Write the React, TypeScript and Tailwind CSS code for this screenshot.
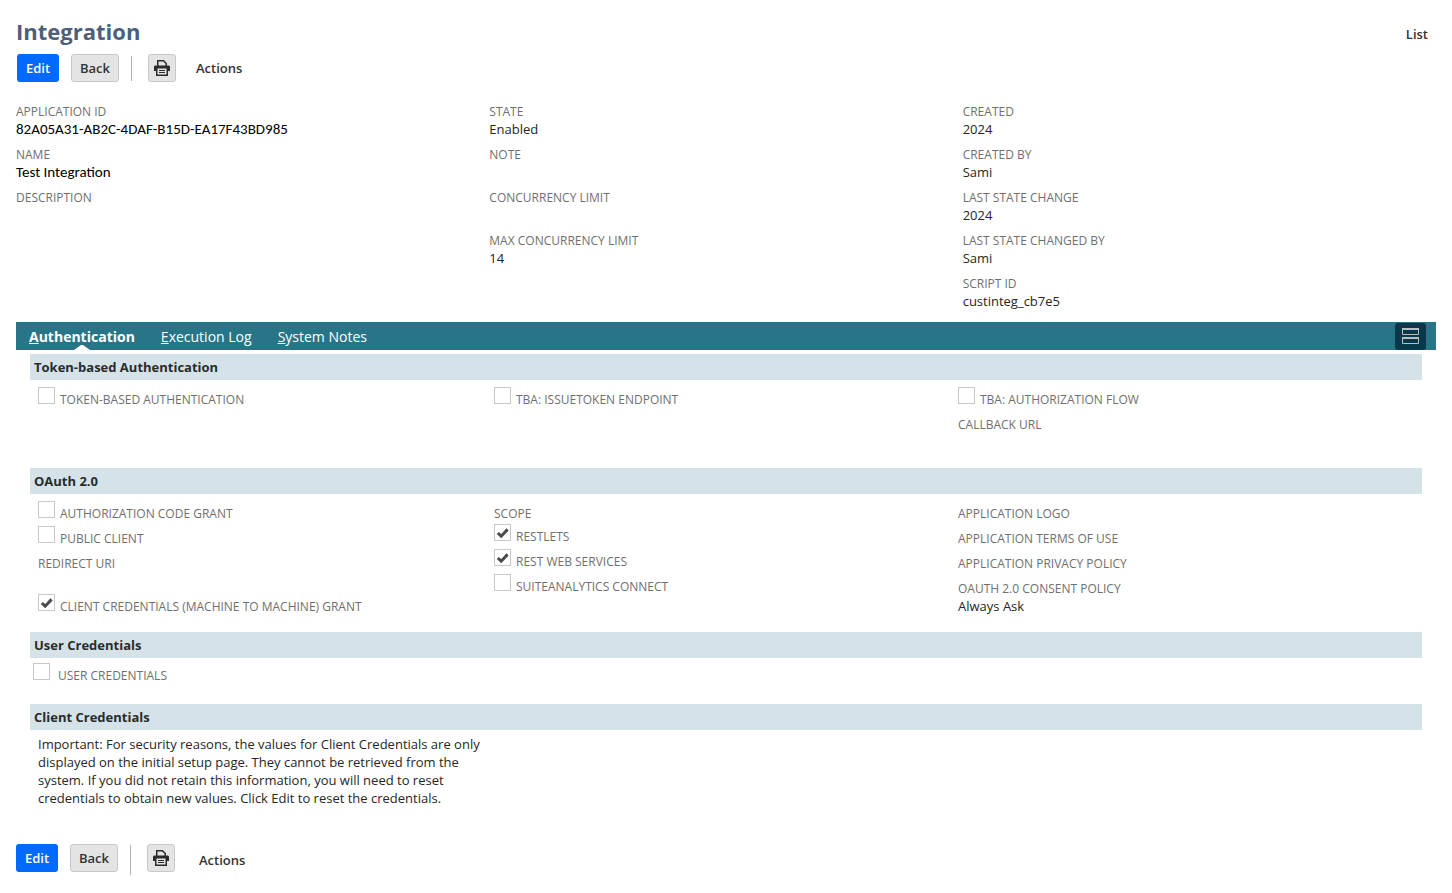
import type { ReactNode } from "react";

function Checkmark() {
  return (
    <svg className="pointer-events-none absolute left-[2px] top-[3px]" width="13" height="12" viewBox="0 0 13 12" fill="none" aria-hidden="true">
      <path d="M1.8 6 L5.2 9.2 L11.6 2.4" stroke="#4a4a4a" strokeWidth="3" />
    </svg>
  );
}

type CheckProps = { id: string; label: string; checked?: boolean; gap?: "normal" | "wide" };

function CheckRow({ id, label, checked = false, gap = "normal" }: CheckProps) {
  return (
    <div className={`flex h-[25px] items-start ${gap === "wide" ? "gap-2" : "gap-[5px]"}`}>
      <span className="relative block size-[17px]">
        <input
          id={id}
          type="checkbox"
          defaultChecked={checked}
          className="block size-[17px] appearance-none border border-[#c8c8c8] bg-white"
        />
        {checked && <Checkmark />}
      </span>
      <label htmlFor={id} className="pt-[3px] text-xs leading-5 text-[#6f6f6f]">
        {label}
      </label>
    </div>
  );
}

function TextRow({ label, value, tall = false }: { label: string; value?: string; tall?: boolean }) {
  return (
    <div className={tall ? "h-[43px] pt-[3px]" : "h-[25px] pt-[3px]"}>
      <div className="h-[18px] text-xs leading-5 text-[#6f6f6f]">{label}</div>
      {value && <div className="text-[13px] leading-[18px] text-[#262626]">{value}</div>}
    </div>
  );
}

function Field({ label, value, alt = false }: { label: string; value?: string; alt?: boolean }) {
  return (
    <div>
      <dt className="h-[18px] text-xs leading-5 text-[#6f6f6f]">{label}</dt>
      <dd
        className={
          alt
            ? "h-[18px] font-['Carlito','Lato',sans-serif] text-[15px] leading-[18px] text-black"
            : "h-[18px] text-[13px] leading-[18px] text-[#262626]"
        }
      >
        {value}
      </dd>
    </div>
  );
}

function Section({ title, children }: { title: string; children: ReactNode }) {
  return (
    <section>
      <h2 className="bg-[#d5e3e8] px-1 text-[13px] font-bold leading-[26px] text-[#2b2b2b]">{title}</h2>
      {children}
    </section>
  );
}

function PrintIcon() {
  return (
    <svg width="16" height="16" viewBox="0 0 16 16" fill="none" aria-hidden="true">
      <path d="M3.75 6V0.75H9.5L12.25 3.5V6" stroke="#2b2b2b" strokeWidth="1.5" />
      <path d="M1 5.5H15L16 6.5V11H13.5V8.5H2.5V11H0V6.5Z" fill="#2b2b2b" />
      <path d="M2.75 8V15.25H13.25V8" stroke="#2b2b2b" strokeWidth="1.5" />
      <path d="M5 10.5H11M5 12.5H11" stroke="#2b2b2b" />
    </svg>
  );
}

function Toolbar({ footer = false }: { footer?: boolean }) {
  return (
    <div className={footer ? "flex items-start" : "flex items-start pl-px"}>
      <button type="button" className="h-7 w-[42px] rounded-[3px] bg-[#006aff] pt-px text-[13px] font-semibold text-white">
        Edit
      </button>
      <button
        type="button"
        className="ml-3 h-7 w-12 rounded-[3px] border border-[#c8c8c8] bg-[#e4e4e4] pt-px text-[13px] font-semibold text-[#333333]"
      >
        Back
      </button>
      <span className={footer ? "ml-3 mt-px h-[30px] w-px bg-[#b3b3b3]" : "ml-3 mt-[2px] h-[25px] w-px bg-[#b3b3b3]"} />
      <button
        type="button"
        aria-label="Print"
        className="ml-4 flex size-7 items-center justify-center rounded-[3px] border border-[#c8c8c8] bg-[#e4e4e4]"
      >
        <PrintIcon />
      </button>
      <button
        type="button"
        className={
          footer
            ? "ml-6 h-8 pt-px text-[13px] font-semibold text-[#333333]"
            : "ml-5 h-7 pt-px text-[13px] font-semibold text-[#333333]"
        }
      >
        Actions
      </button>
    </div>
  );
}

export default function App() {
  return (
    <main className="bg-white px-4 pb-5 font-['Open_Sans',sans-serif]">
      <header className="flex items-start justify-between pt-4">
        <h1 className="text-[22px] font-bold leading-[30px] text-[#4d5f79]">Integration</h1>
        <a href="#list" className="pr-2 pt-[9px] text-[13px] font-semibold leading-[18px] text-[#333333]">
          List
        </a>
      </header>

      <div className="pt-2">
        <Toolbar />
      </div>

      <div className="grid grid-cols-3 pb-3 pt-5">
        <dl className="flex flex-col gap-[7px]">
          <Field label="APPLICATION ID" value="82A05A31-AB2C-4DAF-B15D-EA17F43BD985" alt />
          <Field label="NAME" value="Test Integration" alt />
          <Field label="DESCRIPTION" />
        </dl>
        <dl className="flex flex-col gap-[7px]">
          <Field label="STATE" value="Enabled" />
          <Field label="NOTE" />
          <Field label="CONCURRENCY LIMIT" />
          <Field label="MAX CONCURRENCY LIMIT" value="14" />
        </dl>
        <dl className="flex flex-col gap-[7px]">
          <Field label="CREATED" value="2024" />
          <Field label="CREATED BY" value="Sami" />
          <Field label="LAST STATE CHANGE" value="2024" />
          <Field label="LAST STATE CHANGED BY" value="Sami" />
          <Field label="SCRIPT ID" value="custinteg_cb7e5" />
        </dl>
      </div>

      <nav className="flex h-7 items-center justify-between bg-[#287587] pl-[13px] pr-[10px] text-sm text-white">
        <div className="flex h-7 gap-[26px] leading-[30px]">
          <a href="#authentication" className="relative font-bold">
            <span className="underline underline-offset-1">A</span>uthentication
            <svg className="absolute bottom-0 left-1/2 -translate-x-1/2" width="16" height="5" viewBox="0 0 16 5" aria-hidden="true">
              <path d="M0 5L7 0H9L16 5Z" fill="#fff" />
            </svg>
          </a>
          <a href="#log">
            <span className="underline underline-offset-1">E</span>xecution Log
          </a>
          <a href="#notes">
            <span className="underline underline-offset-1">S</span>ystem Notes
          </a>
        </div>
        <button type="button" aria-label="Toggle layout" className="mt-px flex h-[27px] w-[31px] items-start justify-center rounded-[3px] bg-[#08384a] pt-[5px]">
          <svg width="17" height="16" viewBox="0 0 17 16" fill="none" aria-hidden="true">
            <path d="M0.5 1V6.5H16.5V1M0.5 10V15.5H16.5V10" stroke="#bdbdbd" />
            <path d="M0 1H17M0 10H17" stroke="#bdbdbd" strokeWidth="2" />
          </svg>
        </button>
      </nav>

      <div className="px-[14px] pt-1">
        <Section title="Token-based Authentication">
          <div className="grid grid-cols-3 pb-[13px] pt-[7px]">
            <div className="pl-2">
              <CheckRow id="tba" label="TOKEN-BASED AUTHENTICATION" />
            </div>
            <div>
              <CheckRow id="issuetoken" label="TBA: ISSUETOKEN ENDPOINT" />
            </div>
            <div>
              <CheckRow id="authflow" label="TBA: AUTHORIZATION FLOW" />
              <TextRow label="CALLBACK URL" tall />
            </div>
          </div>
        </Section>

        <Section title="OAuth 2.0">
          <div className="grid grid-cols-3 pb-[13px] pt-[7px]">
            <div className="pl-2">
              <CheckRow id="codegrant" label="AUTHORIZATION CODE GRANT" />
              <CheckRow id="public" label="PUBLIC CLIENT" />
              <TextRow label="REDIRECT URI" tall />
              <CheckRow id="m2m" label="CLIENT CREDENTIALS (MACHINE TO MACHINE) GRANT" checked />
            </div>
            <fieldset>
              <legend className="h-[23px] pt-[3px] text-xs leading-5 text-[#6f6f6f]">SCOPE</legend>
              <CheckRow id="restlets" label="RESTLETS" checked />
              <CheckRow id="rest" label="REST WEB SERVICES" checked />
              <CheckRow id="analytics" label="SUITEANALYTICS CONNECT" />
            </fieldset>
            <div>
              <TextRow label="APPLICATION LOGO" />
              <TextRow label="APPLICATION TERMS OF USE" />
              <TextRow label="APPLICATION PRIVACY POLICY" />
              <TextRow label="OAUTH 2.0 CONSENT POLICY" value="Always Ask" tall />
            </div>
          </div>
        </Section>

        <Section title="User Credentials">
          <div className="pb-4 pl-[3px] pt-[5px]">
            <CheckRow id="user" label="USER CREDENTIALS" gap="wide" />
          </div>
        </Section>

        <Section title="Client Credentials">
          <div className="grid grid-cols-3 pt-[5px]">
            <p className="pl-2 text-[13px] leading-[18px] text-[#262626]">
              Important: For security reasons, the values for Client Credentials are only displayed on the initial setup
              page. They cannot be retrieved from the system. If you did not retain this information, you will need to
              reset credentials to obtain new values. Click Edit to reset the credentials.
            </p>
          </div>
        </Section>
      </div>

      <footer className="pt-[37px]">
        <Toolbar footer />
      </footer>
    </main>
  );
}
